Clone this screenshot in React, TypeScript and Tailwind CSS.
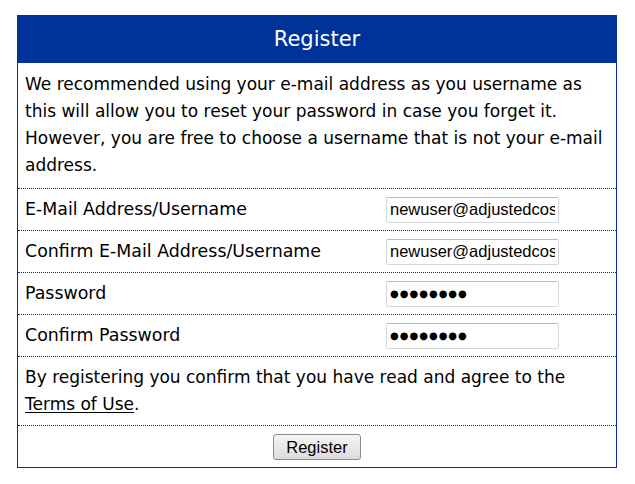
import { useState } from 'react';

const fields = [
	{ label: 'E-Mail Address/Username', secret: false, value: 'newuser@adjustedcostbase.ca' },
	{ label: 'Confirm E-Mail Address/Username', secret: false, value: 'newuser@adjustedcostbase.ca' },
	{ label: 'Password', secret: true, value: '●●●●●●●●' },
	{ label: 'Confirm Password', secret: true, value: '●●●●●●●●' },
];

const App = () => {
	const [values, setValues] = useState<string[]>(fields.map((f) => f.value));

	/**
	 * Update one field of the form
	 *
	 * @param {number} index Index of the field
	 * @param {string} value New value
	 */
	const onChange = (index: number, value: string) => {
		const next = [...values];
		next[index] = value;
		setValues(next);
	};

	return (
		<div className="min-h-[484px] w-[635px] bg-white pt-[15px] pl-[17px] font-['DejaVu_Sans',sans-serif] text-black">
			<div className="w-[600px] border border-[#003399]">
				<div className="h-[48px] -mx-px -mt-px pt-[2px] bg-[#003399] flex items-center justify-center text-[21px] text-white">
					Register
				</div>

				<p className="px-[7px] pt-[8px] pb-[9px] text-[17px] leading-[27px] whitespace-nowrap border-b border-dotted border-[#003399]">
					We recommended using your e-mail address as you username as
					<br />
					this will allow you to reset your password in case you forget it.
					<br />
					However, you are free to choose a username that is not your e-mail
					<br />
					address.
				</p>

				{fields.map((field, index) => (
					<div
						key={field.label}
						className="h-[42px] flex items-center border-b border-dotted border-[#003399] text-[17.4px]">
						<label className="w-[368px] pl-[7px]">{field.label}</label>
						<input
							type="text"
							value={values[index]}
							onChange={(e) => onChange(index, e.target.value)}
							className={
								field.secret
									? "w-[173px] h-[26px] px-[3px] border border-[#d4d8de] border-t-[#b8bcc2] rounded-[2px] bg-white font-['DejaVu_Sans',sans-serif] text-[10px] tracking-[1px] text-black outline-none"
									: "w-[173px] h-[26px] px-[3px] border border-[#d4d8de] border-t-[#b8bcc2] rounded-[2px] bg-white font-['Liberation_Sans',Arial,sans-serif] text-[16.5px] text-black outline-none"
							}
						/>
					</div>
				))}

				<p className="px-[7px] py-[7px] text-[17px] leading-[27px] whitespace-nowrap border-b border-dotted border-[#003399]">
					By registering you confirm that you have read and agree to the
					<br />
					<span className="underline underline-offset-2">Terms of Use</span>.
				</p>

				<div className="h-[41px] flex items-center justify-center">
					<button className="w-[88px] h-[26px] rounded-[3px] border border-[#8c8c8c] bg-gradient-to-b from-[#f6f6f6] to-[#dcdcdc] font-['Liberation_Sans',Arial,sans-serif] text-[16.5px] text-black">
						Register
					</button>
				</div>
			</div>
		</div>
	);
};

export default App;
